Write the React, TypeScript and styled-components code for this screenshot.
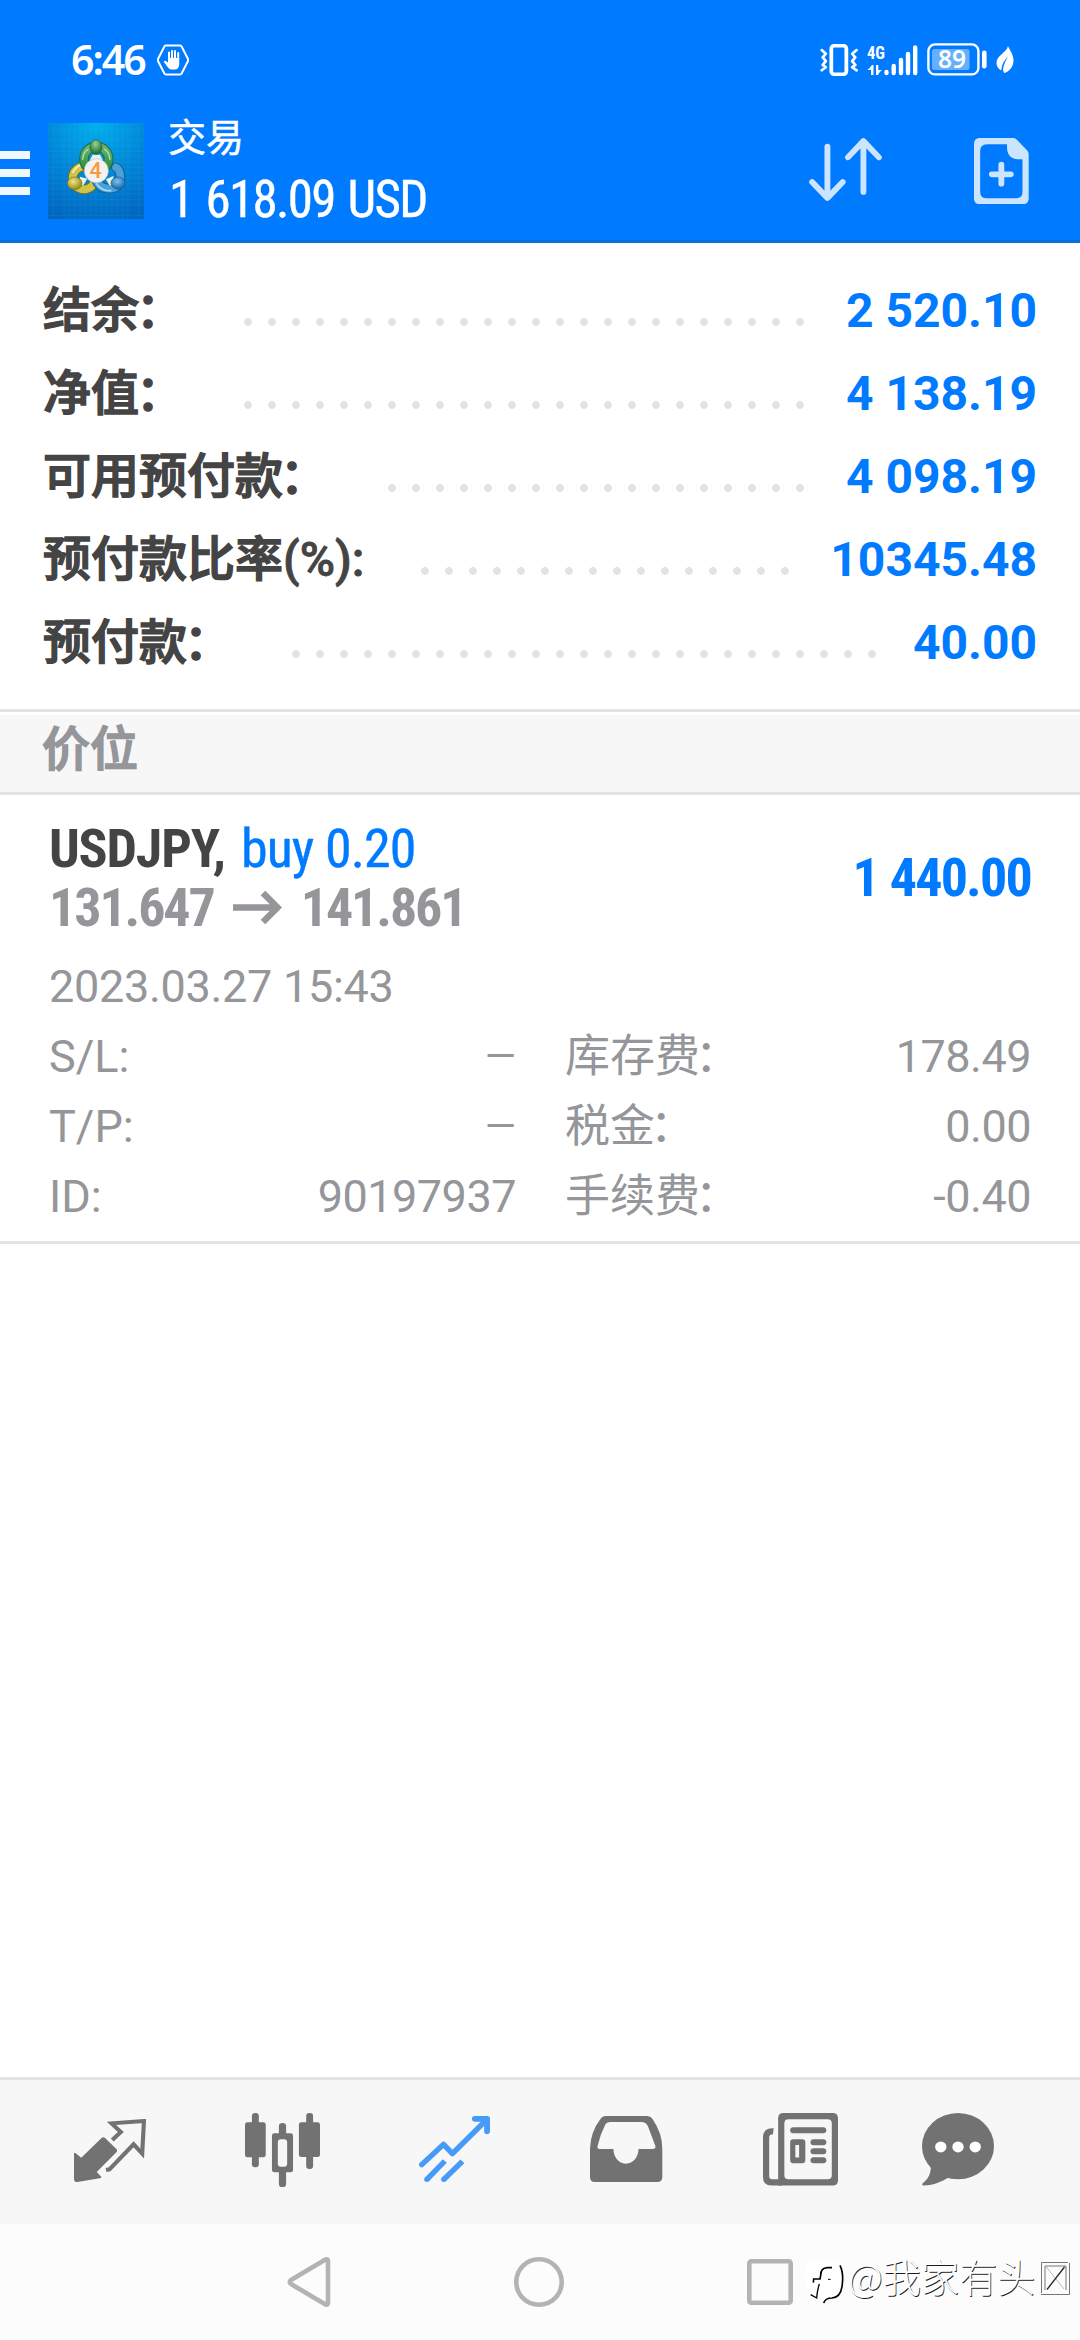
import React from 'react';
import styled, { createGlobalStyle } from 'styled-components';

const BLUE = '#007aff';
const INK = '#444444';
const MUTED = '#95969a';
const LINE = '#e3e3e3';
const ICON = '#727272';
const SANS = "Roboto, 'Noto Sans CJK SC', sans-serif";
const NARROW = "'Roboto Condensed', Roboto, 'Noto Sans CJK SC', sans-serif";

const GlobalStyle = createGlobalStyle`
  * { box-sizing: border-box; }
  html, body { margin: 0; padding: 0; background: #fff; }
  body { font-family: ${SANS}; }
  svg { display: block; flex: none; }
`;

const Screen = styled.div`
  width: 1080px;
  height: 2340px;
  display: flex;
  flex-direction: column;
  background: #fff;
  overflow: hidden;
  position: relative;
  white-space: nowrap;
`;

const Header = styled.header`
  height: 243px;
  background: ${BLUE};
  border-bottom: 3px solid #0a70d8;
`;

const StatusBar = styled.div`
  height: 100px;
  padding: 19px 66px 0 71px;
  display: flex;
  justify-content: space-between;
  align-items: center;
`;

const StatusGroup = styled.div<{ $gap: number }>`
  display: flex;
  align-items: center;
  gap: ${p => p.$gap}px;
`;

const Clock = styled.span`
  font: 600 41px/41px 'Noto Sans', sans-serif;
  letter-spacing: -2px;
  color: #fff;
`;

const AppBar = styled.div`
  height: 140px;
  display: flex;
  align-items: flex-start;
`;

const MenuButton = styled.div`
  width: 30px;
  margin: 51px 18px 0 0;
  display: flex;
  flex-direction: column;
  gap: 10px;
`;

const MenuBar = styled.span`
  height: 8px;
  background: #f0f8ff;
`;

const LogoBox = styled.div`
  margin-top: 23px;
`;

const Titles = styled.div`
  margin-left: 24px;
  flex: 1;
  color: #fff;
`;

const Title = styled.div`
  font: 400 38px/56px ${SANS};
  padding-top: 10px;
  -webkit-text-stroke: 0.5px #fff;
`;

const Balance = styled.div`
  padding: 2px 0 0 1px;
  font: 400 51px/64px ${NARROW};
  font-stretch: 75%;
  letter-spacing: -1.7px;
  word-spacing: 3px;
  -webkit-text-stroke: 0.4px #fff;
`;

const Actions = styled.div`
  display: flex;
  align-items: flex-start;
  gap: 92px;
  padding: 38px 51px 0 0;
`;

const Summary = styled.section`
  padding: 26px 43px 25px;
`;

const SummaryRow = styled.div`
  height: 83px;
  display: flex;
  font: 700 48px/83px ${SANS};
`;

const Label = styled.span`
  color: ${INK};
  font-weight: 500;
  -webkit-text-stroke: 0.8px currentColor;
`;

const Han = styled.span`
  -webkit-text-stroke: 1.5px currentColor;
`;

const Colon = styled.span<{ $shift: number }>`
  margin-left: -${p => p.$shift}px;
  margin-right: ${p => p.$shift}px;
`;

const Leader = styled.span<{ $dots: number }>`
  width: ${p => p.$dots * 24}px;
  height: 8px;
  margin: 49px auto 0 49px;
  background: radial-gradient(circle at 12px 4px, #e3e3e3 3.6px, transparent 4.2px) 0 0 / 24px 8px repeat-x;
`;

const Amount = styled.span`
  color: ${BLUE};
`;

const SectionHead = styled.div`
  height: 86px;
  border-top: 3px solid ${LINE};
  border-bottom: 3px solid ${LINE};
  padding-top: 3px;
`;

const SectionTitle = styled.div`
  height: 77px;
  padding-left: 42px;
  background: #f7f7f7;
  color: ${MUTED};
  font: 500 48px/69px ${SANS};
`;

const Position = styled.section`
  padding: 24px 49px 9px;
  border-bottom: 3px solid ${LINE};
`;

const Deal = styled.div`
  display: flex;
  justify-content: space-between;
  font: 700 54px/59px ${NARROW};
  font-stretch: 75%;
`;

const Symbol = styled.div`
  color: ${INK};
  letter-spacing: -1.2px;
`;

const Side = styled.span`
  margin-left: 5px;
  color: ${BLUE};
  font-weight: 400;
  letter-spacing: -0.9px;
  -webkit-text-stroke: 0.4px ${BLUE};
`;

const Prices = styled.div`
  display: flex;
  align-items: center;
  gap: 19px;
  color: ${MUTED};
  letter-spacing: -2.1px;
`;

const Profit = styled.div`
  color: ${BLUE};
  line-height: 118px;
  letter-spacing: -1.8px;
  word-spacing: 1px;
`;

const Details = styled.div`
  margin-top: 15px;
  color: ${MUTED};
  font: 400 45px/70px ${SANS};
`;

const Opened = styled.div`
  letter-spacing: -0.3px;
`;

const DetailGrid = styled.div`
  display: grid;
  grid-template-columns: 467px 466px;
  column-gap: 49px;
`;

const DetailCell = styled.div`
  display: flex;
  justify-content: space-between;
`;

const DetailValue = styled.span`
  letter-spacing: -0.5px;
`;

const Dash = styled.span`
  font-size: 40px;
`;

const Spacer = styled.div`
  flex: 1;
`;

const TabBar = styled.nav`
  height: 147px;
  border-top: 3px solid ${LINE};
  background: #f7f7f7;
  display: grid;
  grid-template-columns: 172px 172px 172px 173px 174px 142px;
  padding-left: 24px;
`;

const Tab = styled.div<{ $top: number }>`
  display: flex;
  justify-content: center;
  align-items: flex-start;
  padding-top: ${p => p.$top}px;
`;

const SystemNav = styled.div`
  height: 116px;
  background: #fcfcfc;
  display: flex;
  justify-content: center;
  align-items: center;
  gap: 183px;
`;

const Watermark = styled.div`
  position: absolute;
  left: 804px;
  top: 2256px;
  display: flex;
  align-items: flex-start;
  font: 300 38.2px/39px 'Noto Sans CJK SC', sans-serif;
  color: #fff;
  text-shadow: 0.8px 0.8px 0 #1a1a1a;
`;

const HexHand = () => (
  <svg width="32" height="32" viewBox="0 0 32 32">
    <path d="M9 1.6H23Q24 1.6 24.6 2.6L31 15Q31.4 16 31 17L24.6 29.4Q24 30.4 23 30.4H9Q8 30.4 7.4 29.4L1 17Q.6 16 1 15L7.4 2.6Q8 1.6 9 1.6Z" fill="none" stroke="#fff" strokeWidth="2" />
    <path d="M12 16V8.5M15 15V7M18 15V7M21.200 16V9" stroke="#fff" strokeWidth="2" strokeLinecap="round" />
    <path d="M11 14H22.200V20Q22.200 25.500 17.500 25.500H14.500Q12 25.500 10.200 22.500L6.800 18Q7.400 16 9.600 17.400L11 18.500Z" fill="#fff" />
  </svg>
);

const Vibrate = () => (
  <svg width="38" height="32" viewBox="807 129 111 95" preserveAspectRatio="none" fill="none" stroke="#fff">
    <rect x="840" y="134" width="44" height="85" rx="9" strokeWidth="11" />
    <path d="M812 147L824 158L815 169L824 180L815 191L824 198L812 207M914 147L901 158L910 169L901 180L910 191L901 198L914 207" strokeWidth="8" strokeLinecap="round" strokeLinejoin="round" />
  </svg>
);

const Signal = () => (
  <svg width="51" height="44" viewBox="0 -6 51 44" fill="#fff">
    <text x="0" y="14.500" fontFamily="Roboto Condensed, Roboto, sans-serif" fontSize="19" fontWeight="700" textLength="18" lengthAdjust="spacingAndGlyphs">4G</text>
    <path d="M6.5 21V31H4V26H0.3Q3 24 5 21ZM9 21H11.3V26H15Q12 28 11 31H9Z" />
    <g stroke="#fff" strokeWidth="4.400" strokeLinecap="round">
      <path d="M19.500 28V29M26.700 22V29M34 16V29M41 10V29M48.200 3.500V29" />
    </g>
  </svg>
);

const Battery = () => (
  <svg width="60" height="33" viewBox="0 0 60 33">
    <rect x="1.400" y="1.400" width="50" height="30" rx="6.500" fill="none" stroke="#fff" strokeWidth="2.400" />
    <rect x="5" y="6" width="37.500" height="21" rx="2.500" fill="#66afff" />
    <rect x="55" y="7.500" width="4.600" height="18" rx="2.300" fill="#fff" />
    <text x="25" y="25.200" textAnchor="middle" fontFamily="Noto Sans, sans-serif" fontWeight="600" fontSize="24.500" fill="#fff">89</text>
  </svg>
);

const Leaf = () => (
  <svg width="18" height="28" viewBox="0 0 18 28">
    <path d="M12 0C13 3 17.500 8 17.500 14.500C17.500 21 13 26 8 27L7 24Q7.500 18 12 10.500Q6 16 5.200 24.500Q.5 21.500.5 17C.5 9 10.500 7 12 0Z" fill="#fff" />
  </svg>
);

const gridLines = [70, 102, 118, 134, 150, 166, 182, 198, 214, 230, 246, 262, 278, 294, 326];

const AppLogo = () => (
  <svg width="96" height="96" viewBox="54 39 288 288">
    <defs>
      <radialGradient id="sky" cx="0.5" cy="0" r="1.05">
        <stop offset="0" stopColor="#00b0ee" />
        <stop offset="0.5" stopColor="#0287d8" />
        <stop offset="1" stopColor="#0166c0" />
      </radialGradient>
      <linearGradient id="green" x1="0" y1="0" x2="0" y2="1">
        <stop offset="0" stopColor="#6db274" />
        <stop offset="1" stopColor="#1f8a3c" />
      </linearGradient>
      <radialGradient id="greenHead" cx="0.45" cy="0.3" r="0.7">
        <stop offset="0" stopColor="#9ad19a" />
        <stop offset="1" stopColor="#17692c" />
      </radialGradient>
      <radialGradient id="goldHead" cx="0.4" cy="0.35" r="0.7">
        <stop offset="0" stopColor="#f0e684" />
        <stop offset="1" stopColor="#8d8212" />
      </radialGradient>
      <radialGradient id="blueHead" cx="0.45" cy="0.35" r="0.7">
        <stop offset="0" stopColor="#7cc3ee" />
        <stop offset="1" stopColor="#0f62a4" />
      </radialGradient>
    </defs>
    <rect x="54" y="39" width="288" height="288" fill="url(#sky)" />
    <g stroke="#5cc8f4" strokeOpacity="0.2" strokeWidth="1.5">
      {gridLines.map(v => (
        <path key={v} d={`M${v} 39V327M54 ${v - 10}H342`} />
      ))}
    </g>
    <g fill="none" strokeLinecap="round">
      <circle cx="162" cy="204" r="34" stroke="#6f6d22" strokeWidth="29" />
      <circle cx="162" cy="204" r="34" stroke="#cfc44b" strokeWidth="23" />
      <path d="M129 186Q139 166 160 164" stroke="#f5ef9f" strokeWidth="6" />
      <circle cx="199" cy="147" r="37" stroke="#1d6d3d" strokeWidth="29" />
      <circle cx="199" cy="147" r="37" stroke="url(#green)" strokeWidth="23" />
      <path d="M158 148Q160 126 174 118M240 148Q238 126 224 118" stroke="#b5ddb0" strokeWidth="4" />
      <path d="M194 200Q206 238 240 236Q268 234 271 204Q272 180 258 172" stroke="#125d94" strokeWidth="29" />
      <path d="M194 200Q206 238 240 236Q268 234 271 204Q272 180 258 172" stroke="#4ba1d6" strokeWidth="23" />
      <path d="M200 222Q216 244 242 242" stroke="#a6dcf7" strokeWidth="5" />
    </g>
    <path d="M188 134H210L218 150H180ZM150 200L172 206L160 226H148ZM250 198L228 208L238 226H252Z" fill="#e9f4e6" />
    <ellipse cx="198" cy="111" rx="18" ry="22" fill="url(#greenHead)" stroke="#1b6a33" strokeWidth="2" />
    <ellipse cx="134" cy="220" rx="22" ry="19" fill="url(#goldHead)" stroke="#777020" strokeWidth="2" />
    <ellipse cx="264" cy="219" rx="21" ry="18" fill="url(#blueHead)" stroke="#12588d" strokeWidth="2" />
    <circle cx="199" cy="182" r="36" fill="#f3f1f1" stroke="#c2c9c4" strokeWidth="2" />
    <text x="197" y="205" textAnchor="middle" fontFamily="Roboto, sans-serif" fontSize="64" fontWeight="500" fill="#f39a3e">4</text>
  </svg>
);

const SortIcon = () => (
  <svg width="73" height="63.3" viewBox="783 417 212 190" preserveAspectRatio="none" fill="none" stroke="#cce5ff" strokeWidth="17" strokeLinecap="round" strokeLinejoin="round">
    <path d="M836.500 443V596M792 549L836.500 597L881 549M941 579V428M896 475L941 426L986 475" />
  </svg>
);

const NewOrderIcon = () => (
  <svg width="54.700" height="66.300" viewBox="1262 413 159 199" preserveAspectRatio="none">
    <path fillRule="evenodd" fill="#cce5ff" d="M1280 413H1376Q1382 413 1388 420L1416 450Q1421 455 1421 462V594Q1421 612 1403 612H1280Q1262 612 1262 594V431Q1262 413 1280 413ZM1300 432Q1280 432 1280 452V574Q1280 594 1300 594H1382Q1403 594 1403 574V477H1390Q1358 475 1358 440V432Z" />
    <path d="M1341.500 493V550M1314 522H1369" stroke="#cce5ff" strokeWidth="17" strokeLinecap="round" />
  </svg>
);

const PriceArrow = () => (
  <svg width="49" height="33" viewBox="0 0 49 33" fill="none" stroke={MUTED} strokeWidth="6.500">
    <path d="M0 16.500H44M30 2L44.500 16.500L30 31" />
  </svg>
);

const QuotesIcon = () => (
  <svg width="72" height="63.300" viewBox="215 177 209 190" preserveAspectRatio="none">
    <path fill={ICON} d="M215 279H219L236 293L295 234Q300 229 305 234L338 267Q342 272 338 277L281 336L295 351Q294 354 290 355L225 366Q215 367 215 356Z" />
    <path fill="none" stroke={ICON} strokeWidth="12" d="M326 240L351 216L324 190L418 183L413 281L388 253L318 328L308 330" strokeLinejoin="miter" />
  </svg>
);

const ChartIcon = () => (
  <svg width="75" height="74.300" viewBox="709 158 217 223" preserveAspectRatio="none" fill={ICON}>
    <rect x="709" y="186" width="60" height="105" rx="7" />
    <rect x="729" y="158" width="20" height="163" rx="9" />
    <rect x="865" y="186" width="61" height="104" rx="7" />
    <rect x="886" y="158" width="20" height="168" rx="9" />
    <path d="M807 225V198Q807 188 817.500 188Q828 188 828 198V225ZM807 330H828V371Q828 381 817.500 381Q807 381 807 371Z" />
    <path fillRule="evenodd" d="M794 219H841Q848 219 848 226V329Q848 336 841 336H794Q787 336 787 329V226Q787 219 794 219ZM813 237Q804 237 804 246V310Q804 319 813 319H822Q831 319 831 310V246Q831 237 822 237Z" />
  </svg>
);

const TradeIcon = () => (
  <svg width="71" height="66.300" viewBox="1214 168 206 199" preserveAspectRatio="none" fill="none" stroke="#479bf8" strokeWidth="16">
    <path d="M1222 314L1285 253L1311 281L1411 178" strokeLinecap="round" strokeLinejoin="round" />
    <path d="M1376 176.500H1411.500V214" strokeWidth="17" strokeLinecap="round" strokeLinejoin="round" />
    <path d="M1237 358L1289 303M1286 358L1340 304" />
    <g fill="#479bf8" stroke="none">
      <circle cx="1237" cy="358" r="8" />
      <circle cx="1286" cy="358" r="8" />
    </g>
  </svg>
);

const InboxIcon = () => (
  <svg width="72.300" height="66" viewBox="146 168 210 198" preserveAspectRatio="none">
    <path fillRule="evenodd" fill={ICON} d="M192 168H310Q322 168 328 178Q356 220 356 266V352Q356 366 342 366H160Q146 366 146 352V266Q148 215 176 178Q182 168 192 168ZM204 186Q194 186 190 194Q175 225 168 258Q166 267 174 267H214C214 290 229 311 250 311C272 311 287 290 287 267H328Q338 266 336 258L314 198Q308 186 296 186Z" />
  </svg>
);

const NewsIcon = () => (
  <svg width="75" height="72.600" viewBox="646 158 218 218" preserveAspectRatio="none" fill={ICON}>
    <path fillRule="evenodd" d="M706 158H848Q864 158 864 174V360Q864 376 848 376H690V174Q690 158 706 158ZM720 177Q708 177 708 190V344Q708 357 720 357H834Q846 357 846 344V190Q846 177 834 177Z" />
    <path d="M677 204Q646 202 646 232V352Q646 376 670 376H700V357H673Q664 357 664 348V232Q664 222 675 222Z" />
    <rect x="725" y="201" width="105" height="18" rx="9" />
    <path fillRule="evenodd" d="M734 237H760Q769 237 769 246V300Q769 309 760 309H734Q725 309 725 300V246Q725 237 734 237ZM740 254V292H751V254Z" />
    <rect x="784" y="237" width="46" height="18" rx="9" />
    <rect x="784" y="264" width="46" height="18" rx="9" />
    <rect x="784" y="291" width="46" height="18" rx="9" />
  </svg>
);

const ChatIcon = () => (
  <svg width="72" height="72.600" viewBox="1109 158 209 218" preserveAspectRatio="none">
    <g fill={ICON}>
      <ellipse cx="1213.500" cy="257.500" rx="104.500" ry="99.500" />
      <path d="M1132 318Q1136 322 1134 328C1133 345 1124 360 1111 369Q1107 375 1114 376C1145 374 1165 364 1184 353L1200 330Z" />
    </g>
    <g fill="#fff">
      <circle cx="1163.500" cy="260" r="16.500" />
      <circle cx="1213.500" cy="260" r="16.500" />
      <circle cx="1263.500" cy="260" r="16.500" />
    </g>
  </svg>
);

const BackKey = () => (
  <svg width="44" height="52" viewBox="0 0 44 52" fill="none" stroke="#b3b3b3" strokeWidth="4.600" strokeLinejoin="round">
    <path d="M38.500 3.500Q41 2.500 41 5V47Q41 49.500 38.500 48.500L4 28Q1.500 26 4 24Z" />
  </svg>
);

const HomeKey = () => (
  <svg width="50" height="50" viewBox="0 0 50 50" fill="none" stroke="#b3b3b3" strokeWidth="4.600">
    <circle cx="25" cy="25" r="22.700" />
  </svg>
);

const RecentKey = () => (
  <svg width="46" height="46" viewBox="0 0 46 46" fill="none" stroke="#b3b3b3" strokeWidth="4.600">
    <rect x="2.300" y="2.300" width="41.400" height="41.400" rx="2" />
  </svg>
);

const WatermarkLogo = () => (
  <svg width="44" height="50" viewBox="12 78 132 150">
    <path fill="#fff" d="M14 130Q14 92 50 92H96Q128 94 128 140Q130 196 98 204Q76 208 72 216L62 204H40Q14 190 14 130Z" />
    <g fill="none" stroke="#000">
      <path d="M120 106Q132 130 126 170Q121 203 96 204Q76 204 71 219" strokeWidth="5" />
      <path d="M96 113H82Q62 114 62 136L60 147H41L40 158" strokeWidth="5" />
      <path d="M58 162Q52 180 50 204L32 194" strokeWidth="4" />
      <path d="M84 148H92" strokeWidth="3" />
    </g>
  </svg>
);

const MissingGlyph = () => (
  <svg width="40" height="42" viewBox="-4 -2 40 42" fill="none">
    <g stroke="#777" strokeWidth="1">
      <path d="M1.500 35V4.500H28M1 36.500H29.500V5M5 32V8H26V32" />
    </g>
    <path d="M5.500 8L24 31" stroke="#bbb" strokeWidth="1" />
    <path d="M24.500 9L7 31.500" stroke="#222" strokeWidth="1.300" />
  </svg>
);

const summary = [
  { label: '结余', dots: 24, value: '2 520.10' },
  { label: '净值', dots: 24, value: '4 138.19' },
  { label: '可用预付款', dots: 18, value: '4 098.19' },
  { label: '预付款比率', unit: '(%):', dots: 16, value: '10345.48' },
  { label: '预付款', dots: 25, value: '40.00' },
];

const details = [
  { name: 'S/L:' },
  { name: '库存费', wide: true, value: '178.49' },
  { name: 'T/P:' },
  { name: '税金', wide: true, value: '0.00' },
  { name: 'ID:', value: '90197937' },
  { name: '手续费', wide: true, value: '-0.40' },
];

const tabs = [
  { icon: <QuotesIcon />, top: 39 },
  { icon: <ChartIcon />, top: 33 },
  { icon: <TradeIcon />, top: 36 },
  { icon: <InboxIcon />, top: 36 },
  { icon: <NewsIcon />, top: 33 },
  { icon: <ChatIcon />, top: 33 },
];

export default function App() {
  return (
    <Screen>
      <GlobalStyle />
      <Header>
        <StatusBar>
          <StatusGroup $gap={12}>
            <Clock>6:46</Clock>
            <HexHand />
          </StatusGroup>
          <StatusGroup $gap={9}>
            <Vibrate />
            <Signal />
            <Battery />
            <Leaf />
          </StatusGroup>
        </StatusBar>
        <AppBar>
          <MenuButton>
            <MenuBar />
            <MenuBar />
            <MenuBar />
          </MenuButton>
          <LogoBox>
            <AppLogo />
          </LogoBox>
          <Titles>
            <Title>交易</Title>
            <Balance>1 618.09 USD</Balance>
          </Titles>
          <Actions>
            <SortIcon />
            <NewOrderIcon />
          </Actions>
        </AppBar>
      </Header>
      <Summary>
        {summary.map(row => (
          <SummaryRow key={row.label}>
            <Label>
              <Han>
                {row.label}
                {!row.unit && <Colon $shift={3}>：</Colon>}
              </Han>
              {row.unit}
            </Label>
            <Leader $dots={row.dots} />
            <Amount>{row.value}</Amount>
          </SummaryRow>
        ))}
      </Summary>
      <SectionHead>
        <SectionTitle>
          <Han>价位</Han>
        </SectionTitle>
      </SectionHead>
      <Position>
        <Deal>
          <div>
            <Symbol>
              USDJPY, <Side>buy 0.20</Side>
            </Symbol>
            <Prices>
              <span>131.647</span>
              <PriceArrow />
              <span>141.861</span>
            </Prices>
          </div>
          <Profit>1 440.00</Profit>
        </Deal>
        <Details>
          <Opened>2023.03.27 15:43</Opened>
          <DetailGrid>
            {details.map(({ name, wide, value }) => (
              <DetailCell key={name}>
                <span>
                  {name}
                  {wide && <Colon $shift={5}>：</Colon>}
                </span>
                {value ? <DetailValue>{value}</DetailValue> : <Dash>—</Dash>}
              </DetailCell>
            ))}
          </DetailGrid>
        </Details>
      </Position>
      <Spacer />
      <TabBar>
        {tabs.map((tab, i) => (
          <Tab key={i} $top={tab.top}>
            {tab.icon}
          </Tab>
        ))}
      </TabBar>
      <SystemNav>
        <BackKey />
        <HomeKey />
        <RecentKey />
      </SystemNav>
      <Watermark>
        <WatermarkLogo />
        <span>@我家有头</span>
        <MissingGlyph />
      </Watermark>
    </Screen>
  );
}
